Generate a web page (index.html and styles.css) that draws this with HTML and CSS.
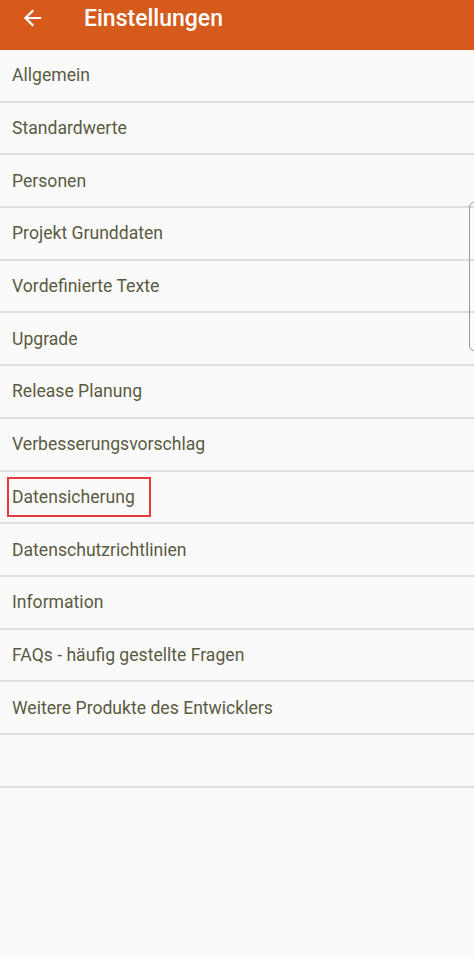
FILE: index.html
```html
<!DOCTYPE html>
<html lang="de">
<head>
<meta charset="utf-8">
<title>Einstellungen</title>
<link rel="stylesheet" href="styles.css">
</head>
<body>
<div class="app">
  <header class="topbar">
    <button class="back" aria-label="Zurück">
      <svg width="20" height="20" viewBox="0 0 20 20"><path d="M18 10H3.5M10.5 3L3.5 10l7 7" fill="none" stroke="#fff" stroke-width="2.2" stroke-linecap="square"/></svg>
    </button>
    <h1 class="title">Einstellungen</h1>
  </header>
  <ul class="menu">
    <li class="item">Allgemein</li>
    <li class="item">Standardwerte</li>
    <li class="item">Personen</li>
    <li class="item">Projekt Grunddaten</li>
    <li class="item">Vordefinierte Texte</li>
    <li class="item">Upgrade</li>
    <li class="item">Release Planung</li>
    <li class="item">Verbesserungsvorschlag</li>
    <li class="item"><span class="marked">Datensicherung</span></li>
    <li class="item">Datenschutzrichtlinien</li>
    <li class="item">Information</li>
    <li class="item">FAQs - häufig gestellte Fragen</li>
    <li class="item">Weitere Produkte des Entwicklers</li>
    <li class="item"></li>
  </ul>
  <div class="scrollbar"></div>
</div>
</body>
</html>
```
FILE: styles.css
```css
* { box-sizing: border-box; }
html, body {
  margin: 0;
  padding: 0;
  background: #fafafa;
}
body {
  font-family: Roboto, "Noto Sans", sans-serif;
}
.app {
  position: relative;
  width: 474px;
  height: 959px;
  overflow: hidden;
  background: #fafafa;
}
.topbar {
  height: 50px;
  background: #d55a1c;
  display: flex;
  align-items: flex-start;
  padding: 5px 0 0 22px;
}
.back {
  background: none;
  border: 0;
  padding: 0;
  margin-top: 3px;
  width: 20px;
  height: 20px;
  display: flex;
}
.title {
  margin: 0 0 0 42px;
  color: #fff;
  font-size: 23px;
  line-height: 27px;
  font-weight: 500;
}
.menu {
  list-style: none;
  margin: 0;
  padding: 0;
}
.item {
  height: 52.7px;
  border-bottom: 2px solid #dedede;
  display: flex;
  align-items: center;
  padding-left: 12px;
  color: #5a5a42;
  font-size: 17.6px;
}
.marked {
  position: relative;
}
.marked::after {
  content: "";
  position: absolute;
  left: -5px;
  right: -16px;
  top: -10px;
  bottom: -10px;
  border: 2px solid #e53a3a;
}
.scrollbar {
  position: absolute;
  left: 469px;
  top: 202px;
  width: 12px;
  height: 149px;
  border: 1.5px solid #9a9a9a;
  border-radius: 5px;
}
```
